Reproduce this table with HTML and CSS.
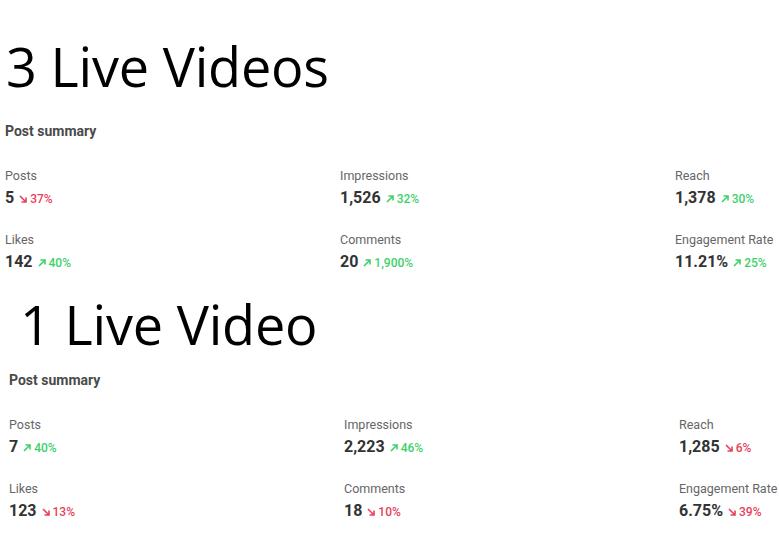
FILE: index.html
```html
<!DOCTYPE html>
<html lang="en">
<head>
    <meta charset="UTF-8">
    <meta name="viewport" content="width=device-width, initial-scale=1.0">
    <title>Live Videos - Post summary</title>
    <link rel="stylesheet" href="styles.css">
</head>
<body>
    <div class="report report-first">
        <h1 class="title">3 Live Videos</h1>
        <div class="summary">
            <h2>Post summary</h2>
            <div class="metrics">
                <div class="metric">
                    <div class="label">Posts</div>
                    <div class="value">5 <span class="change down"><svg viewBox="0 0 8 8"><path d="M1 1 L7 7 M7 2.5 V7 H2.5"/></svg>37%</span></div>
                </div>
                <div class="metric">
                    <div class="label">Impressions</div>
                    <div class="value">1,526 <span class="change up"><svg viewBox="0 0 8 8"><path d="M1 7 L7 1 M2.5 1 H7 V5.5"/></svg>32%</span></div>
                </div>
                <div class="metric">
                    <div class="label">Reach</div>
                    <div class="value">1,378 <span class="change up"><svg viewBox="0 0 8 8"><path d="M1 7 L7 1 M2.5 1 H7 V5.5"/></svg>30%</span></div>
                </div>
                <div class="metric">
                    <div class="label">Likes</div>
                    <div class="value">142 <span class="change up"><svg viewBox="0 0 8 8"><path d="M1 7 L7 1 M2.5 1 H7 V5.5"/></svg>40%</span></div>
                </div>
                <div class="metric">
                    <div class="label">Comments</div>
                    <div class="value">20 <span class="change up"><svg viewBox="0 0 8 8"><path d="M1 7 L7 1 M2.5 1 H7 V5.5"/></svg>1,900%</span></div>
                </div>
                <div class="metric">
                    <div class="label">Engagement Rate</div>
                    <div class="value">11.21% <span class="change up"><svg viewBox="0 0 8 8"><path d="M1 7 L7 1 M2.5 1 H7 V5.5"/></svg>25%</span></div>
                </div>
            </div>
        </div>
    </div>

    <div class="report report-second">
        <h1 class="title">1 Live Video</h1>
        <div class="summary">
            <h2>Post summary</h2>
            <div class="metrics">
                <div class="metric">
                    <div class="label">Posts</div>
                    <div class="value">7 <span class="change up"><svg viewBox="0 0 8 8"><path d="M1 7 L7 1 M2.5 1 H7 V5.5"/></svg>40%</span></div>
                </div>
                <div class="metric">
                    <div class="label">Impressions</div>
                    <div class="value">2,223 <span class="change up"><svg viewBox="0 0 8 8"><path d="M1 7 L7 1 M2.5 1 H7 V5.5"/></svg>46%</span></div>
                </div>
                <div class="metric">
                    <div class="label">Reach</div>
                    <div class="value">1,285 <span class="change down"><svg viewBox="0 0 8 8"><path d="M1 1 L7 7 M7 2.5 V7 H2.5"/></svg>6%</span></div>
                </div>
                <div class="metric">
                    <div class="label">Likes</div>
                    <div class="value">123 <span class="change down"><svg viewBox="0 0 8 8"><path d="M1 1 L7 7 M7 2.5 V7 H2.5"/></svg>13%</span></div>
                </div>
                <div class="metric">
                    <div class="label">Comments</div>
                    <div class="value">18 <span class="change down"><svg viewBox="0 0 8 8"><path d="M1 1 L7 7 M7 2.5 V7 H2.5"/></svg>10%</span></div>
                </div>
                <div class="metric">
                    <div class="label">Engagement Rate</div>
                    <div class="value">6.75% <span class="change down"><svg viewBox="0 0 8 8"><path d="M1 1 L7 7 M7 2.5 V7 H2.5"/></svg>39%</span></div>
                </div>
            </div>
        </div>
    </div>
</body>
</html>
```

FILE: styles.css
```css
html, body {
    overflow: hidden;
}
body {
    margin: 0;
    padding: 0;
    background-color: #fff;
    font-family: Roboto, 'Liberation Sans', sans-serif;
    color: #333;
}
.title {
    font-family: 'Open Sans', 'Liberation Sans', sans-serif;
    font-weight: 400;
    font-size: 54px;
    letter-spacing: -0.2px;
    line-height: 64px;
    color: #000;
    margin: 0;
    white-space: nowrap;
}
.report-first .title {
    padding: 34px 0 0 6px;
}
.report-first .summary {
    padding: 23px 0 0 5px;
}
.report-second .title {
    padding: 17px 0 0 20px;
}
.report-second .summary {
    padding: 14px 0 0 9px;
}
.summary h2 {
    font-size: 14px;
    line-height: 20px;
    font-weight: 700;
    color: #4a4a4a;
    margin: 0;
}
.metrics {
    display: grid;
    grid-template-columns: repeat(3, 335px);
    row-gap: 21px;
    margin-top: 27px;
}
.metric {
    white-space: nowrap;
}
.label {
    font-size: 12.5px;
    line-height: 16px;
    color: #666;
}
.value {
    font-size: 16px;
    line-height: 26px;
    font-weight: 700;
    color: #333;
    margin-top: 1px;
}
.change {
    font-size: 12px;
    line-height: 16px;
    font-weight: 500;
    margin-left: 1px;
}
.change svg {
    width: 8px;
    height: 8px;
    margin-right: 3px;
    fill: none;
    stroke: currentColor;
    stroke-width: 1.6;
}
.up {
    color: #3dd16a;
}
.down {
    color: #e8405a;
}
```
